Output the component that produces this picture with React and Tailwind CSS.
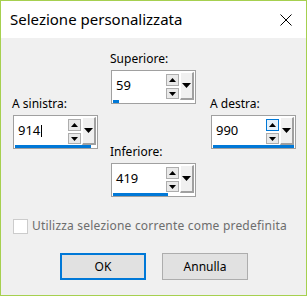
import React from 'react';

const font = { fontFamily: '"Noto Sans", "Open Sans", sans-serif' };

const SpinField = ({ label, value, bar, caret, hotUp }) => (
  <div className="flex flex-col">
    <span className="h-[16px] mb-[3px] text-[12px] leading-[16px] text-black -ml-[1px]">{label}</span>
    <div className="w-[85px] h-[34px] border border-[#a0a0a0] bg-white flex flex-col">
      <div className="flex h-[29px]">
        {/* value */}
        <div className="flex-1 flex items-center pl-[4px] pt-[1px] text-[13px] text-black">
          <span>{value}</span>
          {caret && <span className="ml-[1px] w-[1px] h-[12px] bg-black"></span>}
        </div>
        {/* up / down */}
        <div className="w-[13px] pt-[3px] flex flex-col gap-[2px]">
          <div className={`h-[12px] border flex items-center justify-center ${hotUp ? 'border-[#0078d7] bg-[#e5f1fb]' : 'border-[#adadad] bg-[#e9e9e9]'}`}>
            <svg width="7" height="4" viewBox="0 0 7 4"><path d="M3.5 0 L7 4 L0 4 Z" fill="#000" /></svg>
          </div>
          <div className="h-[11px] border border-[#adadad] bg-[#e9e9e9] flex items-center justify-center">
            <svg width="7" height="4" viewBox="0 0 7 4"><path d="M0 0 L7 0 L3.5 4 Z" fill="#000" /></svg>
          </div>
        </div>
        {/* dropdown */}
        <div className="ml-[1px] mr-[1px] mt-[1px] w-[14px] h-[28px] bg-[#f0f0f0] border-l border-t border-white border-r-2 border-b-2 border-r-[#a0a0a0] border-b-[#a0a0a0] flex items-center justify-center">
          <svg width="9" height="5" viewBox="0 0 9 5"><path d="M0 0 L9 0 L4.5 5 Z" fill="#000" /></svg>
        </div>
      </div>
      <div className="h-[3px] ml-[1px] bg-[#0078d7]" style={{ width: bar }}></div>
    </div>
  </div>
);

export default function App() {
  return (
    <div style={font} className="w-[307px] h-[296px] border border-[#a6d04f] bg-[#f0f0f0] flex flex-col">
      {/* title bar */}
      <div className="h-[37px] shrink-0 bg-white flex items-center justify-between pl-[9px] pr-[14px]">
        <span className="text-[15px] text-black -mt-[1px]">Selezione personalizzata</span>
        <svg width="12" height="12" viewBox="0 0 12 12"><path d="M0.5 0.5 L11.5 11.5 M11.5 0.5 L0.5 11.5" stroke="#000" strokeWidth="1" /></svg>
      </div>

      {/* fields */}
      <div className="flex pl-[12px]">
        <div className="pt-[58px]">
          <SpinField label="A sinistra:" value="914" bar={76} caret />
        </div>
        <div className="ml-[13px] pt-[13px] flex flex-col gap-[40px]">
          <SpinField label="Superiore:" value="59" bar={6} />
          <SpinField label="Inferiore:" value="419" bar={55} />
        </div>
        <div className="ml-[15px] pt-[58px]">
          <SpinField label="A destra:" value="990" bar={81} hotUp />
        </div>
      </div>

      {/* checkbox */}
      <div className="flex items-center pl-[12px] mt-[20px] gap-[4px]">
        <span className="w-[15px] h-[15px] border border-[#cccccc] bg-white"></span>
        <span className="text-[12px] tracking-[0.2px] text-[#6d6d6d]">Utilizza selezione corrente come predefinita</span>
      </div>

      {/* buttons */}
      <div className="flex pl-[59px] gap-[16px] mt-[18px]">
        <button className="w-[86px] h-[27px] border-2 border-[#0078d7] bg-[#e1e1e1] text-[12px] text-black">OK</button>
        <button className="w-[86px] h-[27px] border border-[#adadad] bg-[#e1e1e1] text-[12px] text-black">Annulla</button>
      </div>
    </div>
  );
}
